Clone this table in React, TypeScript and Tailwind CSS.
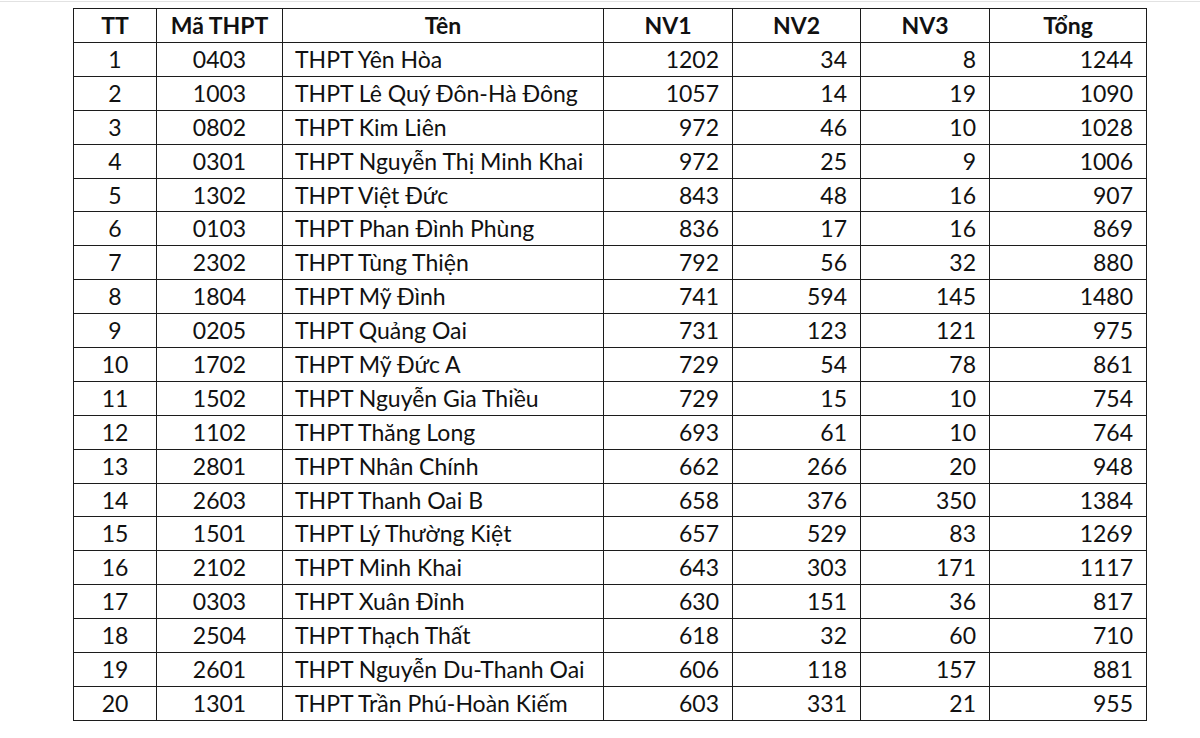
import React from "react";

const rows: [number, string, string, number, number, number, number][] = [
  [1, "0403", "THPT Yên Hòa", 1202, 34, 8, 1244],
  [2, "1003", "THPT Lê Quý Đôn-Hà Đông", 1057, 14, 19, 1090],
  [3, "0802", "THPT Kim Liên", 972, 46, 10, 1028],
  [4, "0301", "THPT Nguyễn Thị Minh Khai", 972, 25, 9, 1006],
  [5, "1302", "THPT Việt Đức", 843, 48, 16, 907],
  [6, "0103", "THPT Phan Đình Phùng", 836, 17, 16, 869],
  [7, "2302", "THPT Tùng Thiện", 792, 56, 32, 880],
  [8, "1804", "THPT Mỹ Đình", 741, 594, 145, 1480],
  [9, "0205", "THPT Quảng Oai", 731, 123, 121, 975],
  [10, "1702", "THPT Mỹ Đức A", 729, 54, 78, 861],
  [11, "1502", "THPT Nguyễn Gia Thiều", 729, 15, 10, 754],
  [12, "1102", "THPT Thăng Long", 693, 61, 10, 764],
  [13, "2801", "THPT Nhân Chính", 662, 266, 20, 948],
  [14, "2603", "THPT Thanh Oai B", 658, 376, 350, 1384],
  [15, "1501", "THPT Lý Thường Kiệt", 657, 529, 83, 1269],
  [16, "2102", "THPT Minh Khai", 643, 303, 171, 1117],
  [17, "0303", "THPT Xuân Đỉnh", 630, 151, 36, 817],
  [18, "2504", "THPT Thạch Thất", 618, 32, 60, 710],
  [19, "2601", "THPT Nguyễn Du-Thanh Oai", 606, 118, 157, 881],
  [20, "1301", "THPT Trần Phú-Hoàn Kiếm", 603, 331, 21, 955],
];

const cell = "border border-[#1c1c1c] p-0 leading-none";

export default function App() {
  return (
    <div
      className="w-[1200px] h-[738px] bg-white overflow-hidden relative text-[#111]"
      style={{ fontFamily: "Lato, 'Open Sans', sans-serif" }}
    >
      <div className="h-[1px] mt-[1px] bg-[#e2e2e2]" />
      <div className="pl-[73px] pt-[6px]">
        <table className="border-collapse table-fixed w-[1073px] text-[23px]">
          <colgroup>
            <col className="w-[83px]" />
            <col className="w-[126px]" />
            <col className="w-[321px]" />
            <col className="w-[129px]" />
            <col className="w-[128px]" />
            <col className="w-[129px]" />
            <col className="w-[157px]" />
          </colgroup>
          <thead>
            <tr className="h-[34px] font-bold">
              <th className={`${cell} text-center`}>TT</th>
              <th className={`${cell} text-center`}>Mã THPT</th>
              <th className={`${cell} text-center`}>Tên</th>
              <th className={`${cell} text-center`}>NV1</th>
              <th className={`${cell} text-center`}>NV2</th>
              <th className={`${cell} text-center`}>NV3</th>
              <th className={`${cell} text-center`}>Tổng</th>
            </tr>
          </thead>
          <tbody>
            {rows.map((r) => (
              <tr key={r[0]} className="h-[33.9px]">
                <td className={`${cell} text-center`}>{r[0]}</td>
                <td className={`${cell} text-center`}>{r[1]}</td>
                <td className={`${cell} text-left pl-[12px] whitespace-nowrap`}>{r[2]}</td>
                <td className={`${cell} text-right pr-[13px]`}>{r[3]}</td>
                <td className={`${cell} text-right pr-[13px]`}>{r[4]}</td>
                <td className={`${cell} text-right pr-[13px]`}>{r[5]}</td>
                <td className={`${cell} text-right pr-[13px]`}>{r[6]}</td>
              </tr>
            ))}
          </tbody>
        </table>
      </div>
    </div>
  );
}
